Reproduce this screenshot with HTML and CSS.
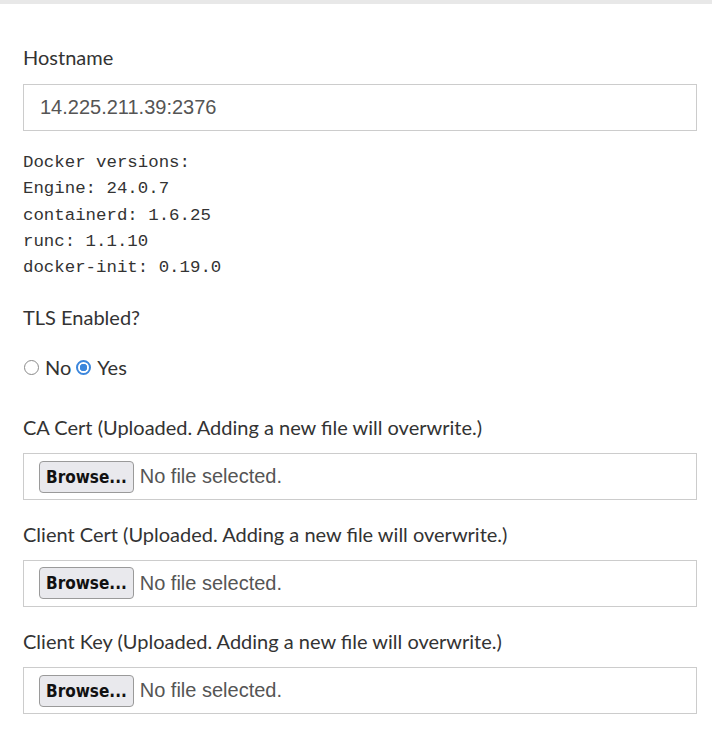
FILE: index.html
```html
<!DOCTYPE html>
<html lang="en">
<head>
    <meta charset="UTF-8">
    <meta name="viewport" content="width=device-width, initial-scale=1">
    <title>Docker endpoint</title>
    <link rel="stylesheet" href="styles.css">
</head>
<body>
    <div class="topbar"></div>
    <form class="endpoint-form">
        <label class="field-label" for="hostname">Hostname</label>
        <input class="text-input" id="hostname" type="text" value="14.225.211.39:2376">

        <pre class="versions">Docker versions:
Engine: 24.0.7
containerd: 1.6.25
runc: 1.1.10
docker-init: 0.19.0</pre>

        <div class="field-label tls-label">TLS Enabled?</div>
        <div class="radio-row">
            <span class="radio"></span><span class="radio-text">No</span>
            <span class="radio checked"></span><span class="radio-text">Yes</span>
        </div>

        <div class="field-label cert-label">CA Cert (Uploaded. Adding a new file will overwrite.)</div>
        <div class="file-box">
            <span class="browse-btn">Browse...</span>
            <span class="file-text">No file selected.</span>
        </div>

        <div class="field-label cert-label next">Client Cert (Uploaded. Adding a new file will overwrite.)</div>
        <div class="file-box">
            <span class="browse-btn">Browse...</span>
            <span class="file-text">No file selected.</span>
        </div>

        <div class="field-label cert-label last">Client Key (Uploaded. Adding a new file will overwrite.)</div>
        <div class="file-box">
            <span class="browse-btn">Browse...</span>
            <span class="file-text">No file selected.</span>
        </div>
    </form>
</body>
</html>
```

FILE: styles.css
```css
body {
    margin: 0;
    padding: 0;
    background: #fff;
    font-family: Lato, "Open Sans", sans-serif;
    color: #333;
}

.topbar {
    height: 4px;
    background: #e8e8e8;
}

.endpoint-form {
    display: flex;
    flex-direction: column;
    padding: 40px 15px 0 23px;
}

.field-label {
    display: block;
    font-size: 20px;
    line-height: 26px;
    margin-bottom: 14px;
}

.text-input {
    box-sizing: border-box;
    height: 47px;
    margin: 0;
    padding: 0 16px;
    border: 1px solid #ccc;
    border-radius: 0;
    font-family: "Liberation Sans", Arial, sans-serif;
    font-size: 20px;
    color: #555;
    outline: none;
}

.versions {
    margin: 19px 0 0;
    font-family: "Liberation Mono", monospace;
    font-size: 17.4px;
    line-height: 26.25px;
    color: #333;
}

.tls-label {
    margin-top: 23px;
    margin-bottom: 24px;
}

.radio-row {
    display: flex;
    align-items: center;
    height: 26px;
    font-size: 20px;
}

.radio {
    box-sizing: border-box;
    width: 15px;
    height: 15px;
    margin: 0 6px 0 1px;
    border: 1px solid #8a8a8a;
    border-radius: 50%;
}

.radio.checked {
    border: 2px solid #3b86dc;
    background: radial-gradient(circle, #3b86dc 0 3.5px, #fff 4px);
}

.radio-text {
    margin-right: 4px;
}

.cert-label {
    margin-top: 34px;
    margin-bottom: 13px;
}

.cert-label.next {
    margin-top: 20.5px;
}

.cert-label.last {
    margin-top: 21.5px;
}

.file-box {
    box-sizing: border-box;
    height: 47px;
    display: flex;
    align-items: center;
    padding-left: 15px;
    border: 1px solid #ccc;
}

.browse-btn {
    box-sizing: border-box;
    height: 32px;
    display: flex;
    align-items: center;
    padding: 0 6px;
    border: 1px solid #9a9a9a;
    border-radius: 4px;
    background: #e9e9ed;
    font-family: "DejaVu Sans Condensed", "DejaVu Sans", sans-serif;
    font-weight: bold;
    font-size: 17px;
    color: #111;
}

.file-text {
    margin-left: 6px;
    font-family: "Liberation Sans", Arial, sans-serif;
    font-size: 20px;
    color: #555;
}
```
